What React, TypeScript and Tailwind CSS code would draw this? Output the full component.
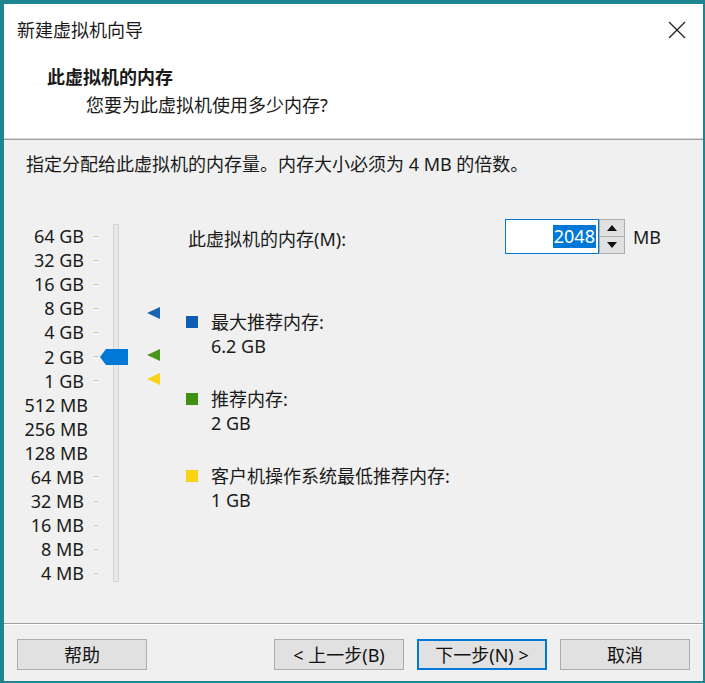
import React from 'react';

const FONT = '"Noto Sans", "Noto Sans CJK SC", sans-serif';

const scaleLabels = [
  '64 GB', '32 GB', '16 GB', '8 GB', '4 GB', '2 GB', '1 GB',
  '512 MB', '256 MB', '128 MB', '64 MB', '32 MB', '16 MB', '8 MB', '4 MB',
];

const ROW = 24.1;

// marker positions measured in rows from the top label
const markers = [
  { pos: 3.2, color: '#1b62b0' },
  { pos: 4.95, color: '#4a961d' },
  { pos: 5.95, color: '#f7d21c' },
];

const legend = [
  { color: 'bg-[#0b5eb3]', label: '最大推荐内存:', value: '6.2 GB' },
  { color: 'bg-[#409112]', label: '推荐内存:', value: '2 GB' },
  { color: 'bg-[#fdd212]', label: '客户机操作系统最低推荐内存:', value: '1 GB' },
];

const MemorySlider: React.FC = () => (
  <div className="relative flex w-[140px] shrink-0">
    <div className="flex w-[72px] flex-col pt-[1px]">
      {scaleLabels.map((l) => (
        <div key={l} className="flex h-[24.1px] items-center justify-end">
          <span className="whitespace-nowrap leading-none">{l}</span>
          <span className="ml-[10px] h-px w-[4px] bg-[#c8c8c8]" />
        </div>
      ))}
    </div>
    <div className="ml-[15px] mt-[1px] h-[358px] w-[6px] border border-[#d4d4d4] bg-[#e7e7e7]" />
    {/* thumb */}
    <svg
      className="absolute"
      style={{ left: 74, top: 5 * ROW + 4 }}
      width="29"
      height="18"
      viewBox="0 0 29 18"
    >
      <path d="M0 9 L6 1 L28 1 L28 17 L6 17 Z" fill="#0078d7" />
    </svg>
    {markers.map((m) => (
      <svg
        key={m.color}
        className="absolute"
        style={{ left: 121, top: m.pos * ROW + 6 }}
        width="14"
        height="14"
        viewBox="0 0 14 14"
      >
        <path d="M0 7 L13 1 L13 13 Z" fill={m.color} />
      </svg>
    ))}
  </div>
);

const WizButton: React.FC<{ label: string; focused?: boolean }> = ({ label, focused }) => (
  <button
    className={`h-[31px] w-[130px] bg-[#e1e1e1] text-[18px] leading-none text-[#111] ${
      focused ? 'border-2 border-[#0078d7]' : 'border border-[#adadad]'
    }`}
  >
    {label}
  </button>
);

export default function App() {
  return (
    <div
      className="h-[683px] w-[705px] overflow-hidden bg-[#1f8590] pb-[2px] pl-[4px] pr-[2px] pt-[4px] text-[18px] text-[#1a1a1a]"
      style={{ fontFamily: FONT }}
    >
      <div className="flex h-full flex-col bg-[#f0f0f0]">
        {/* title bar */}
        <div className="flex h-[52px] items-center justify-between bg-white pl-[13px] pr-[17px]">
          <span className="leading-none">新建虚拟机向导</span>
          <svg width="18" height="18" viewBox="0 0 18 18">
            <path d="M1 1 L17 17 M17 1 L1 17" stroke="#222" strokeWidth="1.3" />
          </svg>
        </div>

        {/* header */}
        <div className="h-[82px] bg-white pl-[43px] pt-[7px]">
          <div className="font-bold leading-[28px]">此虚拟机的内存</div>
          <div className="pl-[39px] leading-[28px]">您要为此虚拟机使用多少内存?</div>
        </div>
        <div className="h-px bg-[#d8d8d8]" />
        <div className="h-px bg-[#a0a0a0]" />

        {/* body */}
        <div className="flex-1 pl-[22px]">
          <div className="mt-[12px] leading-[24px]">
            指定分配给此虚拟机的内存量。内存大小必须为 4 MB 的倍数。
          </div>

          <div className="mt-[47px] flex">
            <MemorySlider />

            <div className="ml-[20px] flex flex-1 flex-col">
              <div className="flex items-center">
                <span className="pl-[2px] leading-none">此虚拟机的内存(M):</span>
                <div className="ml-[159px] -mt-[4px] flex">
                  <div className="flex h-[35px] w-[94px] items-center justify-end border border-[#0078d7] bg-white pr-[2px]">
                    <span className="bg-[#0078d7] px-[1px] leading-[23px] text-white">2048</span>
                  </div>
                  <div className="flex h-[35px] w-[26px] flex-col">
                    <div className="flex h-1/2 items-center justify-center border border-[#adadad] bg-[#e1e1e1]">
                      <svg width="10" height="6" viewBox="0 0 10 6">
                        <path d="M0 6 L5 0 L10 6 Z" fill="#111" />
                      </svg>
                    </div>
                    <div className="flex h-1/2 items-center justify-center border border-t-0 border-[#adadad] bg-[#e1e1e1]">
                      <svg width="10" height="6" viewBox="0 0 10 6">
                        <path d="M0 0 L10 0 L5 6 Z" fill="#111" />
                      </svg>
                    </div>
                  </div>
                  <span className="ml-[8px] self-center leading-none">MB</span>
                </div>
              </div>

              <div className="mt-[56px] flex flex-col gap-[29px]">
                {legend.map((g) => (
                  <div key={g.label} className="flex">
                    <span className={`mt-[6px] h-[12px] w-[12px] ${g.color}`} />
                    <div className="ml-[13px] flex flex-col leading-[24px]">
                      <span>{g.label}</span>
                      <span>{g.value}</span>
                    </div>
                  </div>
                ))}
              </div>
            </div>
          </div>
        </div>

        {/* footer */}
        <div className="h-px bg-[#a0a0a0]" />
        <div className="h-px bg-[#ffffff]" />
        <div className="flex h-[56px] items-start pl-[13px] pr-[13px] pt-[14px]">
          <WizButton label="帮助" />
          <div className="flex-1" />
          <WizButton label="< 上一步(B)" />
          <div className="w-[13px]" />
          <WizButton label="下一步(N) >" focused />
          <div className="w-[13px]" />
          <WizButton label="取消" />
        </div>
      </div>
    </div>
  );
}
